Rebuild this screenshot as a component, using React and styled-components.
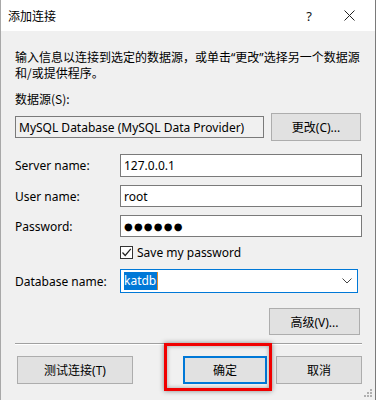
import React from "react";
import styled, { createGlobalStyle } from "styled-components";

const GlobalStyle = createGlobalStyle`
  html, body {
    margin: 0;
    padding: 0;
    background: #f0f0f0;
  }
  body {
    font-family: "Segoe UI", "Noto Sans", "Noto Sans CJK SC", sans-serif;
    font-size: 12px;
    color: #000;
  }
`;

const Window = styled.div`
  position: relative;
  width: 376px;
  height: 400px;
  box-sizing: border-box;
  border-left: 1px solid #a8a8a8;
  border-right: 1px solid #7a7a7a;
  background: #f0f0f0;
  display: flex;
  flex-direction: column;
  overflow: hidden;
`;

const TitleBar = styled.div`
  height: 31px;
  background: #fff;
  display: flex;
  align-items: center;
  padding-left: 7px;
  flex-shrink: 0;
`;

const Title = styled.div`
  flex: 1;
  font-family: "Noto Sans CJK SC", sans-serif;
  font-size: 12px;
  margin-top: -1px;
`;

const TitleButton = styled.div`
  width: ${({ $w }) => $w}px;
  display: flex;
  justify-content: center;
  align-items: center;
  font-family: "Noto Sans", sans-serif;
  font-size: 13px;
  color: #111;
`;

const Body = styled.div`
  padding: 18px 13px 0 14px;
  display: flex;
  flex-direction: column;
`;

const Text = styled.div`
  font-family: "Noto Sans CJK SC", sans-serif;
  line-height: 15px;
  font-size: 12px;
  white-space: nowrap;
  margin-bottom: ${({ $mb }) => $mb || 0}px;
`;

const Quote = styled.span`
  font-family: "Noto Sans", sans-serif;
`;

const SourceRow = styled.div`
  display: flex;
  align-items: center;
  gap: 7px;
  margin-top: 7px;
`;

const SourceBox = styled.div`
  width: 249px;
  height: 22px;
  box-sizing: border-box;
  border: 1px solid #7a7a7a;
  background: #f0f0f0;
  display: flex;
  align-items: center;
  padding-left: 3px;
  font-family: "Noto Sans", sans-serif;
  font-size: 12px;
  white-space: nowrap;
`;

const Button = styled.div`
  width: ${({ $w }) => $w}px;
  height: ${({ $h }) => $h || 27}px;
  box-sizing: border-box;
  border: ${({ $primary }) => ($primary ? "2px solid #0078d7" : "1px solid #adadad")};
  background: #e1e1e1;
  display: flex;
  align-items: center;
  justify-content: center;
  font-family: "Noto Sans", "Noto Sans CJK SC", sans-serif;
  font-size: 12px;
`;

const Form = styled.div`
  display: grid;
  grid-template-columns: 105px 242px;
  row-gap: 8px;
  margin-top: 13px;
  align-items: center;
`;

const Label = styled.div`
  font-family: "Noto Sans", sans-serif;
  font-size: 12px;
`;

const Field = styled.div`
  height: ${({ $h }) => $h || 23}px;
  width: ${({ $w }) => $w || 242}px;
  box-sizing: border-box;
  border: 1px solid ${({ $focus }) => ($focus ? "#0078d7" : "#7a7a7a")};
  background: #fff;
  display: flex;
  align-items: center;
  padding-left: 3px;
  font-family: "Noto Sans", sans-serif;
  font-size: 12px;
`;

const Dots = styled.span`
  font-family: "DejaVu Sans", sans-serif;
  font-size: 10px;
  letter-spacing: 1.2px;
`;

const Selected = styled.span`
  background: #0078d7;
  color: #fff;
  padding: 0 1px 1px 0;
  line-height: 17px;
  border-right: 1px solid #e08a2c;
`;

const Chevron = styled.svg`
  margin-left: auto;
  margin-right: 5px;
`;

const CheckRow = styled.div`
  grid-column: 2;
  display: flex;
  align-items: center;
  gap: 4px;
  margin-top: -1px;
`;

const CheckBox = styled.div`
  width: 13px;
  height: 13px;
  box-sizing: border-box;
  border: 1px solid #333;
  background: #fff;
  display: flex;
  align-items: center;
  justify-content: center;
`;

const AdvancedRow = styled.div`
  display: flex;
  justify-content: flex-end;
  padding-right: 2px;
  margin-top: 15px;
`;

const Separator = styled.div`
  height: 1px;
  background: #a0a0a0;
  border-bottom: 1px solid #fff;
  margin: 8px 0 11px 0;
  width: 347px;
`;

const Footer = styled.div`
  display: flex;
  align-items: center;
  padding-left: 2px;
`;

const Spacer = styled.div`
  width: ${({ $w }) => $w}px;
`;

const Highlight = styled.div`
  position: absolute;
  left: 163px;
  top: 343px;
  width: 108px;
  height: 48px;
  box-sizing: border-box;
  border: 3px solid #f00000;
  box-shadow: 0 0 5px rgba(0, 0, 0, 0.45), inset 0 0 4px rgba(0, 0, 0, 0.35);
  pointer-events: none;
`;

const Grip = styled.svg`
  position: absolute;
  right: 2px;
  bottom: 2px;
`;

export default function App() {
  return (
    <>
      <GlobalStyle />
      <Window>
        <TitleBar>
          <Title>添加连接</Title>
          <TitleButton $w={28}>?</TitleButton>
          <TitleButton $w={52}>
            <svg width="11" height="11" viewBox="0 0 11 11">
              <path d="M0.5 0.5 L10.5 10.5 M10.5 0.5 L0.5 10.5" stroke="#222" strokeWidth="1" />
            </svg>
          </TitleButton>
        </TitleBar>
        <Body>
          <Text>
            输入信息以连接到选定的数据源，或单击<Quote>“</Quote>更改<Quote>”</Quote>选择另一个数据源
          </Text>
          <Text $mb={11}>和/或提供程序。</Text>
          <Text>数据源(S):</Text>
          <SourceRow>
            <SourceBox>MySQL Database (MySQL Data Provider)</SourceBox>
            <Button $w={90} $h={28}>更改(C)...</Button>
          </SourceRow>
          <Form>
            <Label>Server name:</Label>
            <Field>127.0.0.1</Field>
            <Label>User name:</Label>
            <Field $h={22}>root</Field>
            <Label>Password:</Label>
            <Field $h={22}>
              <Dots>●●●●●●</Dots>
            </Field>
            <CheckRow>
              <CheckBox>
                <svg width="11" height="11" viewBox="0 0 11 11">
                  <path d="M1.5 5.5 L4.2 8.5 L9.8 1.8" fill="none" stroke="#222" strokeWidth="1.2" />
                </svg>
              </CheckBox>
              <Label>Save my password</Label>
            </CheckRow>
            <Label>Database name:</Label>
            <Field $h={24} $w={238} $focus>
              <Selected>katdb</Selected>
              <Chevron width="10" height="6" viewBox="0 0 10 6">
                <path d="M0.5 0.5 L5 5 L9.5 0.5" fill="none" stroke="#444" strokeWidth="1" />
              </Chevron>
            </Field>
          </Form>
          <AdvancedRow>
            <Button $w={91} $h={27}>高级(V)...</Button>
          </AdvancedRow>
          <Separator />
          <Footer>
            <Button $w={116} $h={28}>测试连接(T)</Button>
            <Spacer $w={50} />
            <Button $w={84} $h={28} $primary>确定</Button>
            <Spacer $w={9} />
            <Button $w={86} $h={28}>取消</Button>
          </Footer>
        </Body>
        <Highlight />
        <Grip width="9" height="9" viewBox="0 0 9 9">
          <rect x="6" y="0" width="2" height="2" fill="#b0b0b0" />
          <rect x="3" y="3" width="2" height="2" fill="#b0b0b0" />
          <rect x="6" y="3" width="2" height="2" fill="#b0b0b0" />
          <rect x="0" y="6" width="2" height="2" fill="#b0b0b0" />
          <rect x="3" y="6" width="2" height="2" fill="#b0b0b0" />
          <rect x="6" y="6" width="2" height="2" fill="#b0b0b0" />
        </Grip>
      </Window>
    </>
  );
}
